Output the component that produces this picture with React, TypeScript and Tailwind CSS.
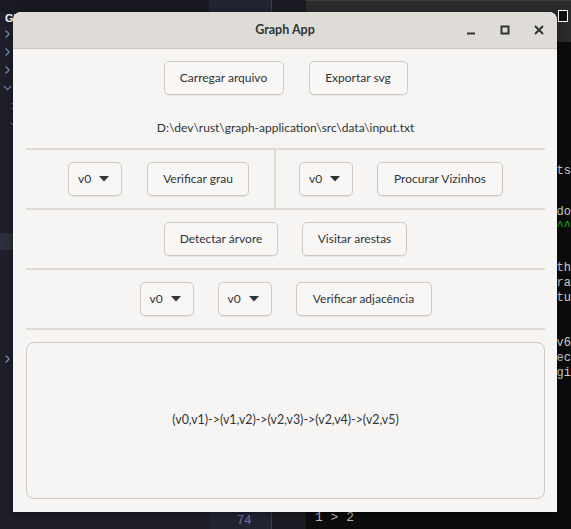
import { ChevronDown, ChevronRight } from 'lucide-react'

const terminalLines: { text: string; top: string; green?: boolean }[] = [
  { text: 'ts', top: 'mt-[122px]' },
  { text: 'do', top: 'mt-[26px]' },
  { text: '^^', top: 'mt-0', green: true },
  { text: 'th', top: 'mt-[26px]' },
  { text: 'ra', top: 'mt-0' },
  { text: 'tu', top: 'mt-0' },
  { text: 'v6', top: 'mt-[30px]' },
  { text: 'ec', top: 'mt-0' },
  { text: 'gi', top: 'mt-0' },
]

function Caret() {
  return (
    <svg width="10" height="6" viewBox="0 0 10 6" className="shrink-0">
      <path d="M0 0 H10 L5 5.5 Z" fill="#2e3436" />
    </svg>
  )
}

function GtkButton({ label, width }: { label: string; width: string }) {
  return (
    <button
      type="button"
      className={`${width} h-[34px] shrink-0 rounded-[5px] border border-[#cfc9c4] bg-[#f8f7f6] text-[12px] text-[#2e3436] shadow-[0_1px_1px_rgba(0,0,0,0.06)]`}
    >
      {label}
    </button>
  )
}

function Dropdown() {
  return (
    <button
      type="button"
      className="flex h-[34px] w-[54px] shrink-0 items-center justify-between rounded-[5px] border border-[#cfc9c4] bg-[#f8f7f6] pl-[9px] pr-[12px] text-[12px] text-[#2e3436] shadow-[0_1px_1px_rgba(0,0,0,0.06)]"
    >
      <span>v0</span>
      <Caret />
    </button>
  )
}

function Separator() {
  return <div className="h-[2px] shrink-0 bg-[#dedad6]" />
}

function GraphWindow() {
  return (
    <div className="absolute left-[13px] top-[12px] flex h-[500px] w-[544px] flex-col overflow-hidden rounded-t-[8px] bg-[#f6f5f4] font-['Lato',sans-serif] text-[#2e3436] shadow-[0_2px_8px_rgba(0,0,0,0.4)]">
      <header className="grid h-[37px] shrink-0 grid-cols-[1fr_auto_1fr] items-center border-b border-[#ccc6bf] bg-[#dfdcd8]">
        <div />
        <span className="text-[12.5px] font-bold">Graph App</span>
        <div className="flex justify-end pr-[1px]">
          <span className="flex h-[34px] w-[34px] items-center justify-center">
            <svg width="16" height="16" viewBox="0 0 16 16">
              <path d="M4 11.5 H12" stroke="#2e3436" strokeWidth="2" />
            </svg>
          </span>
          <span className="flex h-[34px] w-[34px] items-center justify-center">
            <svg width="16" height="16" viewBox="0 0 16 16">
              <rect x="4.5" y="4.5" width="7" height="7" fill="none" stroke="#2e3436" strokeWidth="2" />
            </svg>
          </span>
          <span className="flex h-[34px] w-[34px] items-center justify-center">
            <svg width="16" height="16" viewBox="0 0 16 16">
              <path d="M4 4 L12 12 M12 4 L4 12" stroke="#2e3436" strokeWidth="2" />
            </svg>
          </span>
        </div>
      </header>

      <div className="flex flex-1 flex-col pl-[13px] pr-[12px]">
        <section className="flex flex-col pb-[10px] pt-[12px]">
          <div className="flex justify-center gap-[25px]">
            <GtkButton label="Carregar arquivo" width="w-[120px]" />
            <GtkButton label="Exportar svg" width="w-[99px]" />
          </div>
          <p className="mt-[23px] h-[20px] text-center text-[12px] leading-[20px]">
            D:\dev\rust\graph-application\src\data\input.txt
          </p>
        </section>

        <Separator />

        <section className="flex h-[58px] shrink-0">
          <div className="flex w-[248px] items-center gap-[25px] pl-[42px]">
            <Dropdown />
            <GtkButton label="Verificar grau" width="w-[102px]" />
          </div>
          <div className="w-[2px] bg-[#dedad6]" />
          <div className="flex items-center gap-[24px] pl-[23px]">
            <Dropdown />
            <GtkButton label="Procurar Vizinhos" width="w-[126px]" />
          </div>
        </section>

        <Separator />

        <section className="flex h-[58px] shrink-0 items-center justify-center gap-[24px]">
          <GtkButton label="Detectar árvore" width="w-[114px]" />
          <GtkButton label="Visitar arestas" width="w-[105px]" />
        </section>

        <Separator />

        <section className="flex h-[58px] shrink-0 items-center justify-center gap-[24px]">
          <Dropdown />
          <Dropdown />
          <GtkButton label="Verificar adjacência" width="w-[136px]" />
        </section>

        <Separator />

        <div className="mt-[12px] flex h-[157px] items-center justify-center rounded-[8px] border border-[#cdc8c3] bg-[#f6f5f4]">
          <span className="text-[12.4px]">(v0,v1)-&gt;(v1,v2)-&gt;(v2,v3)-&gt;(v2,v4)-&gt;(v2,v5)</span>
        </div>
      </div>
    </div>
  )
}

export default function App() {
  return (
    <div className="relative h-[529px] w-[571px] overflow-hidden bg-[#1e1f29]">
      {/* editor behind the window */}
      <div className="flex h-full">
        <aside className="flex w-[210px] flex-col bg-[#1e1f29]">
          <div className="flex h-[12px] bg-[#191a21]" />
          <div className="flex h-[13px] items-center pl-[5px] font-['Liberation_Sans',sans-serif] text-[11px] font-bold text-white">
            GRAPH-APPLICATION
          </div>
          <div className="flex flex-col text-[#7d92c2]">
            <ChevronRight size={13} className="ml-[1px] h-[18px]" />
            <ChevronRight size={13} className="ml-[1px] h-[18px]" />
            <ChevronRight size={13} className="ml-[1px] h-[18px]" />
            <ChevronDown size={13} className="ml-[1px] h-[18px]" />
            <ChevronRight size={11} className="ml-[8px] h-[18px]" />
            <ChevronDown size={11} className="ml-[8px] h-[18px]" />
            <div className="h-[100px]" />
            <div className="h-[17px] bg-[#2d2f3d]" />
            <div className="h-[100px]" />
            <ChevronRight size={13} className="ml-[1px] h-[18px]" />
          </div>
        </aside>
        <div className="flex w-[62px] flex-col justify-end bg-[#222433] pb-[1px] pl-[28px] font-['Liberation_Mono',monospace] text-[12px] leading-[14px] text-[#6d7ab0]">
          74
        </div>
        <div className="w-[1px] bg-[#3a3c4e]" />
        <div className="flex w-[34px] flex-col bg-[#1b1c23]" />
        <div className="flex flex-1 flex-col">
          <div className="h-[42px] border-t border-[#3a3a3a] bg-[#2b2b2b] pl-[252px] pt-[9px]">
            <div className="h-[12px] w-[10px] border border-white bg-[#111]" />
          </div>
          <div className="flex flex-1 flex-col bg-[#0c0c0c] pl-[251px] font-['Liberation_Mono',monospace] text-[12px] leading-[15px] text-[#cccccc]">
            {terminalLines.map((line, i) => (
              <span key={i} className={`${line.top} ${line.green ? 'text-[#16c60c]' : ''}`}>
                {line.text}
              </span>
            ))}
          </div>
        </div>
      </div>

      <div className="absolute bottom-[2px] left-[315px] font-['Liberation_Mono',monospace] text-[13px] text-[#bbbbbb]">
        1 &gt; 2
      </div>

      <GraphWindow />
    </div>
  )
}
